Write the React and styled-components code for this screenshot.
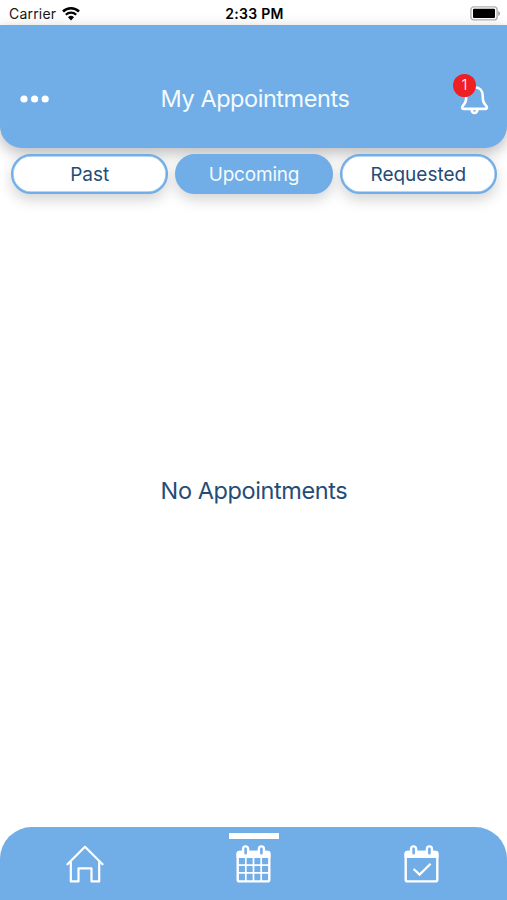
import React, { useState } from "react";
import styled, { createGlobalStyle } from "styled-components";

const BLUE = "#71ade6";
const NAVY = "#254c76";

const GlobalStyle = createGlobalStyle`
  * {
    box-sizing: border-box;
  }
  body {
    margin: 0;
    background: #fff;
    font-family: Inter, "Liberation Sans", sans-serif;
  }
  button {
    font-family: inherit;
    cursor: pointer;
  }
`;

const Screen = styled.div`
  display: flex;
  flex-direction: column;
  height: 100vh;
  min-height: 900px;
  overflow: hidden;
  background: #fff;
`;

const StatusBar = styled.div`
  display: grid;
  grid-template-columns: 1fr auto 1fr;
  align-items: center;
  height: 25px;
  flex: none;
  padding: 2px 7px 0 9px;
  color: #161616;
  font-size: 14px;
  line-height: 20px;
`;

const Carrier = styled.div`
  display: flex;
  align-items: center;
  gap: 6px;
  letter-spacing: 0.2px;
`;

const Clock = styled.div`
  color: #000;
  font-weight: 600;
  letter-spacing: 0.3px;
`;

const Battery = styled.div`
  display: flex;
  justify-content: flex-end;
`;

const Header = styled.header`
  display: grid;
  grid-template-columns: 1fr auto 1fr;
  align-items: center;
  height: 123px;
  flex: none;
  padding: 25px 17px 0 20px;
  border-radius: 0 0 22px 22px;
  background: ${BLUE};
  box-shadow: 0 5px 15px rgba(0, 0, 0, 0.28);
`;

const Title = styled.h1`
  margin: 0;
  padding-bottom: 1px;
  color: #f4fbff;
  font-size: 23.5px;
  font-weight: 400;
  line-height: 30px;
  letter-spacing: -0.45px;
`;

const IconButton = styled.button`
  display: flex;
  position: relative;
  padding: 0;
  border: 0;
  background: none;
  justify-self: ${(props) => props.$align};
`;

const BellButton = styled(IconButton)`
  margin: 2px 1px 0 0;
`;

const Badge = styled.span`
  position: absolute;
  left: -7px;
  top: -11px;
  width: 23px;
  height: 23px;
  border-radius: 50%;
  background: #ee2024;
  color: #fff;
  font-size: 15px;
  font-weight: 300;
  line-height: 21px;
  text-align: center;
`;

const Tabs = styled.div`
  display: grid;
  grid-template-columns: repeat(3, 1fr);
  gap: 7px;
  flex: none;
  padding: 6px 10px 0 11px;
`;

const Tab = styled.button`
  height: 40px;
  padding: 1px 0 0;
  border: 2px solid ${BLUE};
  border-radius: 20px;
  background: ${(props) => (props.$active ? BLUE : "#fff")};
  color: ${(props) => (props.$active ? "#f4fbff" : NAVY)};
  font-size: 19px;
  font-weight: 400;
  line-height: 24px;
  letter-spacing: ${(props) => (props.$active ? "-0.2px" : "0")};
  box-shadow: inset 0 0 0 0.5px ${BLUE}, 0 6px 14px rgba(0, 0, 0, 0.17);
`;

const Content = styled.main`
  display: flex;
  flex: 1;
  align-items: center;
  justify-content: center;
  padding-bottom: 40px;
`;

const EmptyText = styled.p`
  margin: 0;
  padding-left: 1px;
  color: ${NAVY};
  font-size: 23.5px;
  line-height: 30px;
  letter-spacing: -0.4px;
`;

const BottomBar = styled.nav`
  display: grid;
  grid-template-columns: 169px 169px 1fr;
  height: 73px;
  flex: none;
  padding-right: 2px;
  border-radius: 32px 32px 0 0;
  background: ${BLUE};
`;

const NavItem = styled.button`
  display: flex;
  flex-direction: column;
  align-items: center;
  gap: 6px;
  padding: 6px 0 0;
  border: 0;
  background: none;
`;

const Indicator = styled.span`
  width: 50px;
  height: 6px;
  background: ${(props) => (props.$visible ? "#fff" : "transparent")};
`;

const WifiIcon = () => (
  <svg width="18" height="14" viewBox="0 0 18 14" fill="none">
    <path d="M1 4.5a11.6 11.6 0 0 1 16 0" stroke="#000" strokeWidth="2.6" />
    <path d="M3.8 7.7a7.4 7.4 0 0 1 10.4 0" stroke="#000" strokeWidth="2.2" />
    <path d="M6 10.2a4.5 4.5 0 0 1 6 0L9 13.5z" fill="#000" />
  </svg>
);

const BatteryIcon = () => (
  <svg width="30" height="15" viewBox="0 0 30 15">
    <rect x="0.9" y="0.9" width="26.2" height="13" rx="3" fill="#fff" stroke="#b1b1b1" strokeWidth="1.4" />
    <rect x="3" y="2.8" width="22" height="9.2" rx="1" fill="#000" />
    <path d="M28.2 5v5q2-.9 2-2.5T28.2 5z" fill="#a5a5a5" />
  </svg>
);

const DotsIcon = () => (
  <svg width="29" height="8" viewBox="0 0 29 8" fill="#fff">
    <circle cx="4" cy="4" r="3.6" />
    <circle cx="14.6" cy="4" r="3.6" />
    <circle cx="25.2" cy="4" r="3.6" />
  </svg>
);

const BellIcon = () => (
  <svg width="29" height="30" viewBox="0 0 29 30" fill="none" stroke="#fff" strokeWidth="2.6" strokeLinejoin="round" strokeLinecap="round">
    <path d="M14.5 2.2c-5.2 0-8.2 3.6-8.2 8.5 0 5.8-1.2 7.4-3.5 10.2-1.4 1.8-.7 3 .9 3h21.6c1.6 0 2.3-1.2.9-3-2.3-2.8-3.5-4.4-3.5-10.2 0-4.9-3-8.5-8.2-8.5z" />
    <path d="M11.7 25c.2 3.9 5.4 3.9 5.6 0" />
  </svg>
);

const HomeIcon = () => (
  <svg width="38" height="38" viewBox="0 0 38 38" fill="none" stroke="#fff" strokeWidth="2.2" strokeLinejoin="round" strokeLinecap="round">
    <path d="M1.5 19.3L19 1.8l17.5 17.5" />
    <path d="M4.8 17v19.4h7.7V23.3h13v13.1h7.7V17" />
  </svg>
);

// Frame and binder rings shared by both calendar icons
const CalendarFrame = () => (
  <>
    <path d="M3.5 5.8h28a3 3 0 0 1 3 3V13H.5V8.8a3 3 0 0 1 3-3z" fill="#fff" />
    <rect x="1.7" y="7" width="31.6" height="29.4" rx="2" stroke="#fff" strokeWidth="2.4" />
    <rect x="7.1" y="1.4" width="5" height="9.3" rx="2.4" fill={BLUE} stroke="#fff" strokeWidth="2.4" />
    <rect x="22.9" y="1.4" width="5" height="9.3" rx="2.4" fill={BLUE} stroke="#fff" strokeWidth="2.4" />
  </>
);

const CalendarIcon = () => (
  <svg width="35" height="38" viewBox="0 0 35 38" fill="none">
    <CalendarFrame />
    <path d="M9.8 13v23M17.5 13v23M25.2 13v23M2 20.2h31M2 27.900h31" stroke="#fff" strokeWidth="1.7" />
  </svg>
);

const CalendarCheckIcon = () => (
  <svg width="35" height="38" viewBox="0 0 35 38" fill="none">
    <CalendarFrame />
    <path d="M9.6 24l6 5.6 11-10.8" stroke="#fff" strokeWidth="2.3" />
  </svg>
);

const tabs = ["Past", "Upcoming", "Requested"];

const navItems = [
  { name: "home", Icon: HomeIcon },
  { name: "appointments", Icon: CalendarIcon },
  { name: "confirmed", Icon: CalendarCheckIcon },
];

const App = () => {
  const [tab, setTab] = useState("Upcoming");
  const [page, setPage] = useState("appointments");

  return (
    <>
      <GlobalStyle />
      <Screen>
        <StatusBar>
          <Carrier>
            Carrier
            <WifiIcon />
          </Carrier>
          <Clock>2:33 PM</Clock>
          <Battery>
            <BatteryIcon />
          </Battery>
        </StatusBar>
        <Header>
          <IconButton $align="start">
            <DotsIcon />
          </IconButton>
          <Title>My Appointments</Title>
          <BellButton $align="end">
            <BellIcon />
            <Badge>1</Badge>
          </BellButton>
        </Header>
        <Tabs>
          {tabs.map((name) => (
            <Tab key={name} $active={tab === name} onClick={() => setTab(name)}>
              {name}
            </Tab>
          ))}
        </Tabs>
        <Content>
          <EmptyText>No Appointments</EmptyText>
        </Content>
        <BottomBar>
          {navItems.map(({ name, Icon }) => (
            <NavItem key={name} onClick={() => setPage(name)}>
              <Indicator $visible={page === name} />
              <Icon />
            </NavItem>
          ))}
        </BottomBar>
      </Screen>
    </>
  );
};

export default App;
